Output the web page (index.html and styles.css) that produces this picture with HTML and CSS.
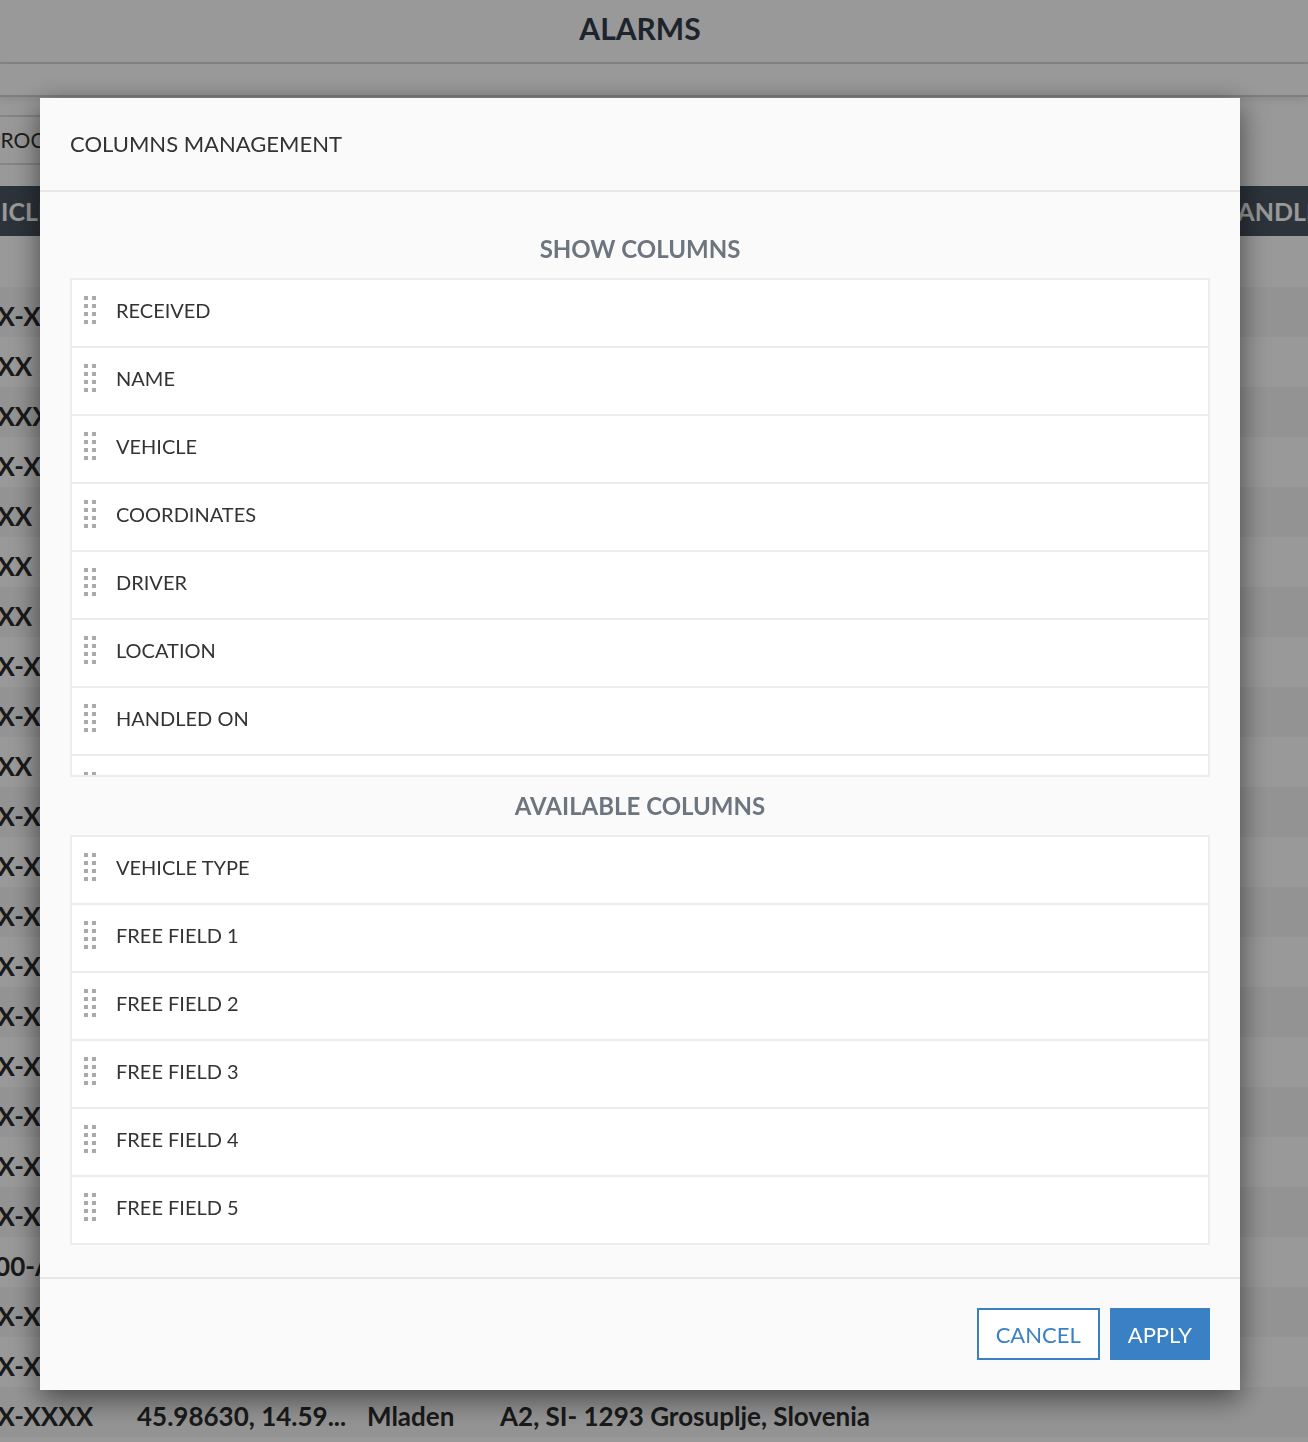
FILE: index.html
```html
<!DOCTYPE html>
<html lang="en">
<head>
    <meta charset="UTF-8">
    <meta name="viewport" content="width=device-width, initial-scale=1.0">
    <title>Alarms</title>
    <link rel="stylesheet" href="styles.css">
</head>
<body>

<!-- alarms page (behind the dialog) -->
<div class="page">
    <div class="page-header">
        <h1>ALARMS</h1>
    </div>
    <div class="sub-bar"></div>

    <div class="toolbar">
        <div class="status-select">PROCESSED</div>
    </div>

    <div class="alarm-table">
        <div class="alarm-head">
            <div class="cell first">VEHICLE</div>
            <div class="cell">COORDINATES</div>
            <div class="cell">DRIVER</div>
            <div class="cell">LOCATION</div>
            <div class="cell">HANDLED ON</div>
        </div>
        <div class="alarm-spacer"></div>

        <div class="alarm-row"><div class="cell">XX-XXXX</div><div class="cell">45.98630, 14.59...</div><div class="cell">Mladen</div><div class="cell">A2, SI- 1293 Grosuplje, Slovenia</div><div class="cell"></div></div>
        <div class="alarm-row"><div class="cell">XXX&nbsp;&nbsp;XX</div><div class="cell">46.05108, 14.50...</div><div class="cell">Mladen</div><div class="cell">A1, SI- 1000 Ljubljana, Slovenia</div><div class="cell"></div></div>
        <div class="alarm-row"><div class="cell">XXXXXX</div><div class="cell">46.05108, 14.50...</div><div class="cell">Mladen</div><div class="cell">A1, SI- 1000 Ljubljana, Slovenia</div><div class="cell"></div></div>
        <div class="alarm-row"><div class="cell">XX-XXXX</div><div class="cell">45.98630, 14.59...</div><div class="cell">Mladen</div><div class="cell">A2, SI- 1293 Grosuplje, Slovenia</div><div class="cell"></div></div>
        <div class="alarm-row"><div class="cell">XXX&nbsp;&nbsp;XX</div><div class="cell">46.23970, 15.26...</div><div class="cell">Mladen</div><div class="cell">A1, SI- 3000 Celje, Slovenia</div><div class="cell"></div></div>
        <div class="alarm-row"><div class="cell">XXX&nbsp;&nbsp;XX</div><div class="cell">46.23970, 15.26...</div><div class="cell">Mladen</div><div class="cell">A1, SI- 3000 Celje, Slovenia</div><div class="cell"></div></div>
        <div class="alarm-row"><div class="cell">XXX&nbsp;&nbsp;XX</div><div class="cell">46.23970, 15.26...</div><div class="cell">Mladen</div><div class="cell">A1, SI- 3000 Celje, Slovenia</div><div class="cell"></div></div>
        <div class="alarm-row"><div class="cell">XX-XXXX</div><div class="cell">45.98630, 14.59...</div><div class="cell">Mladen</div><div class="cell">A2, SI- 1293 Grosuplje, Slovenia</div><div class="cell"></div></div>
        <div class="alarm-row"><div class="cell">XX-XXXX</div><div class="cell">45.98630, 14.59...</div><div class="cell">Mladen</div><div class="cell">A2, SI- 1293 Grosuplje, Slovenia</div><div class="cell"></div></div>
        <div class="alarm-row"><div class="cell">XXX&nbsp;&nbsp;XX</div><div class="cell">46.55472, 15.64...</div><div class="cell">Mladen</div><div class="cell">A1, SI- 2000 Maribor, Slovenia</div><div class="cell"></div></div>
        <div class="alarm-row"><div class="cell">XX-XXXX</div><div class="cell">45.98630, 14.59...</div><div class="cell">Mladen</div><div class="cell">A2, SI- 1293 Grosuplje, Slovenia</div><div class="cell"></div></div>
        <div class="alarm-row"><div class="cell">XX-XXXX</div><div class="cell">45.98630, 14.59...</div><div class="cell">Mladen</div><div class="cell">A2, SI- 1293 Grosuplje, Slovenia</div><div class="cell"></div></div>
        <div class="alarm-row"><div class="cell">XX-XXXX</div><div class="cell">45.98630, 14.59...</div><div class="cell">Mladen</div><div class="cell">A2, SI- 1293 Grosuplje, Slovenia</div><div class="cell"></div></div>
        <div class="alarm-row"><div class="cell">XX-XXXX</div><div class="cell">45.98630, 14.59...</div><div class="cell">Mladen</div><div class="cell">A2, SI- 1293 Grosuplje, Slovenia</div><div class="cell"></div></div>
        <div class="alarm-row"><div class="cell">XX-XXXX</div><div class="cell">45.98630, 14.59...</div><div class="cell">Mladen</div><div class="cell">A2, SI- 1293 Grosuplje, Slovenia</div><div class="cell"></div></div>
        <div class="alarm-row"><div class="cell">XX-XXXX</div><div class="cell">45.98630, 14.59...</div><div class="cell">Mladen</div><div class="cell">A2, SI- 1293 Grosuplje, Slovenia</div><div class="cell"></div></div>
        <div class="alarm-row"><div class="cell">XX-XXXX</div><div class="cell">45.98630, 14.59...</div><div class="cell">Mladen</div><div class="cell">A2, SI- 1293 Grosuplje, Slovenia</div><div class="cell"></div></div>
        <div class="alarm-row"><div class="cell">XX-XXXX</div><div class="cell">45.98630, 14.59...</div><div class="cell">Mladen</div><div class="cell">A2, SI- 1293 Grosuplje, Slovenia</div><div class="cell"></div></div>
        <div class="alarm-row"><div class="cell">XX-XXXX</div><div class="cell">45.98630, 14.59...</div><div class="cell">Mladen</div><div class="cell">A2, SI- 1293 Grosuplje, Slovenia</div><div class="cell"></div></div>
        <div class="alarm-row"><div class="cell">000-ABC</div><div class="cell">45.98630, 14.59...</div><div class="cell">Mladen</div><div class="cell">A2, SI- 1293 Grosuplje, Slovenia</div><div class="cell"></div></div>
        <div class="alarm-row"><div class="cell">XX-XXXX</div><div class="cell">45.98630, 14.59...</div><div class="cell">Mladen</div><div class="cell">A2, SI- 1293 Grosuplje, Slovenia</div><div class="cell"></div></div>
        <div class="alarm-row"><div class="cell">XX-XXXX</div><div class="cell">45.98630, 14.59...</div><div class="cell">Mladen</div><div class="cell">A2, SI- 1293 Grosuplje, Slovenia</div><div class="cell"></div></div>
        <div class="alarm-row"><div class="cell">XX-XXXX</div><div class="cell">45.98630, 14.59...</div><div class="cell">Mladen</div><div class="cell">A2, SI- 1293 Grosuplje, Slovenia</div><div class="cell"></div></div>
    </div>
</div>

<!-- columns management dialog -->
<div class="backdrop">
    <div class="modal">
        <div class="modal-header">COLUMNS MANAGEMENT</div>

        <div class="modal-body">
            <h3 class="section-title">SHOW COLUMNS</h3>
            <ul class="column-list visible-list">
                <li><svg class="handle" viewBox="0 0 12 28"><rect x="0" y="0" width="4" height="4"/><rect x="8" y="0" width="4" height="4"/><rect x="0" y="8" width="4" height="4"/><rect x="8" y="8" width="4" height="4"/><rect x="0" y="16" width="4" height="4"/><rect x="8" y="16" width="4" height="4"/><rect x="0" y="24" width="4" height="4"/><rect x="8" y="24" width="4" height="4"/></svg>RECEIVED</li>
                <li><svg class="handle" viewBox="0 0 12 28"><rect x="0" y="0" width="4" height="4"/><rect x="8" y="0" width="4" height="4"/><rect x="0" y="8" width="4" height="4"/><rect x="8" y="8" width="4" height="4"/><rect x="0" y="16" width="4" height="4"/><rect x="8" y="16" width="4" height="4"/><rect x="0" y="24" width="4" height="4"/><rect x="8" y="24" width="4" height="4"/></svg>NAME</li>
                <li><svg class="handle" viewBox="0 0 12 28"><rect x="0" y="0" width="4" height="4"/><rect x="8" y="0" width="4" height="4"/><rect x="0" y="8" width="4" height="4"/><rect x="8" y="8" width="4" height="4"/><rect x="0" y="16" width="4" height="4"/><rect x="8" y="16" width="4" height="4"/><rect x="0" y="24" width="4" height="4"/><rect x="8" y="24" width="4" height="4"/></svg>VEHICLE</li>
                <li><svg class="handle" viewBox="0 0 12 28"><rect x="0" y="0" width="4" height="4"/><rect x="8" y="0" width="4" height="4"/><rect x="0" y="8" width="4" height="4"/><rect x="8" y="8" width="4" height="4"/><rect x="0" y="16" width="4" height="4"/><rect x="8" y="16" width="4" height="4"/><rect x="0" y="24" width="4" height="4"/><rect x="8" y="24" width="4" height="4"/></svg>COORDINATES</li>
                <li><svg class="handle" viewBox="0 0 12 28"><rect x="0" y="0" width="4" height="4"/><rect x="8" y="0" width="4" height="4"/><rect x="0" y="8" width="4" height="4"/><rect x="8" y="8" width="4" height="4"/><rect x="0" y="16" width="4" height="4"/><rect x="8" y="16" width="4" height="4"/><rect x="0" y="24" width="4" height="4"/><rect x="8" y="24" width="4" height="4"/></svg>DRIVER</li>
                <li><svg class="handle" viewBox="0 0 12 28"><rect x="0" y="0" width="4" height="4"/><rect x="8" y="0" width="4" height="4"/><rect x="0" y="8" width="4" height="4"/><rect x="8" y="8" width="4" height="4"/><rect x="0" y="16" width="4" height="4"/><rect x="8" y="16" width="4" height="4"/><rect x="0" y="24" width="4" height="4"/><rect x="8" y="24" width="4" height="4"/></svg>LOCATION</li>
                <li><svg class="handle" viewBox="0 0 12 28"><rect x="0" y="0" width="4" height="4"/><rect x="8" y="0" width="4" height="4"/><rect x="0" y="8" width="4" height="4"/><rect x="8" y="8" width="4" height="4"/><rect x="0" y="16" width="4" height="4"/><rect x="8" y="16" width="4" height="4"/><rect x="0" y="24" width="4" height="4"/><rect x="8" y="24" width="4" height="4"/></svg>HANDLED ON</li>
                <li><svg class="handle" viewBox="0 0 12 28"><rect x="0" y="0" width="4" height="4"/><rect x="8" y="0" width="4" height="4"/><rect x="0" y="8" width="4" height="4"/><rect x="8" y="8" width="4" height="4"/><rect x="0" y="16" width="4" height="4"/><rect x="8" y="16" width="4" height="4"/><rect x="0" y="24" width="4" height="4"/><rect x="8" y="24" width="4" height="4"/></svg>HANDLED BY</li>
            </ul>

            <h3 class="section-title">AVAILABLE COLUMNS</h3>
            <ul class="column-list">
                <li><svg class="handle" viewBox="0 0 12 28"><rect x="0" y="0" width="4" height="4"/><rect x="8" y="0" width="4" height="4"/><rect x="0" y="8" width="4" height="4"/><rect x="8" y="8" width="4" height="4"/><rect x="0" y="16" width="4" height="4"/><rect x="8" y="16" width="4" height="4"/><rect x="0" y="24" width="4" height="4"/><rect x="8" y="24" width="4" height="4"/></svg>VEHICLE TYPE</li>
                <li><svg class="handle" viewBox="0 0 12 28"><rect x="0" y="0" width="4" height="4"/><rect x="8" y="0" width="4" height="4"/><rect x="0" y="8" width="4" height="4"/><rect x="8" y="8" width="4" height="4"/><rect x="0" y="16" width="4" height="4"/><rect x="8" y="16" width="4" height="4"/><rect x="0" y="24" width="4" height="4"/><rect x="8" y="24" width="4" height="4"/></svg>FREE FIELD 1</li>
                <li><svg class="handle" viewBox="0 0 12 28"><rect x="0" y="0" width="4" height="4"/><rect x="8" y="0" width="4" height="4"/><rect x="0" y="8" width="4" height="4"/><rect x="8" y="8" width="4" height="4"/><rect x="0" y="16" width="4" height="4"/><rect x="8" y="16" width="4" height="4"/><rect x="0" y="24" width="4" height="4"/><rect x="8" y="24" width="4" height="4"/></svg>FREE FIELD 2</li>
                <li><svg class="handle" viewBox="0 0 12 28"><rect x="0" y="0" width="4" height="4"/><rect x="8" y="0" width="4" height="4"/><rect x="0" y="8" width="4" height="4"/><rect x="8" y="8" width="4" height="4"/><rect x="0" y="16" width="4" height="4"/><rect x="8" y="16" width="4" height="4"/><rect x="0" y="24" width="4" height="4"/><rect x="8" y="24" width="4" height="4"/></svg>FREE FIELD 3</li>
                <li><svg class="handle" viewBox="0 0 12 28"><rect x="0" y="0" width="4" height="4"/><rect x="8" y="0" width="4" height="4"/><rect x="0" y="8" width="4" height="4"/><rect x="8" y="8" width="4" height="4"/><rect x="0" y="16" width="4" height="4"/><rect x="8" y="16" width="4" height="4"/><rect x="0" y="24" width="4" height="4"/><rect x="8" y="24" width="4" height="4"/></svg>FREE FIELD 4</li>
                <li><svg class="handle" viewBox="0 0 12 28"><rect x="0" y="0" width="4" height="4"/><rect x="8" y="0" width="4" height="4"/><rect x="0" y="8" width="4" height="4"/><rect x="8" y="8" width="4" height="4"/><rect x="0" y="16" width="4" height="4"/><rect x="8" y="16" width="4" height="4"/><rect x="0" y="24" width="4" height="4"/><rect x="8" y="24" width="4" height="4"/></svg>FREE FIELD 5</li>
            </ul>
        </div>

        <div class="modal-footer">
            <button class="btn btn-outline">CANCEL</button>
            <button class="btn btn-primary">APPLY</button>
        </div>
    </div>
</div>

</body>
</html>
```

FILE: styles.css
```css
html, body {
    margin: 0;
    height: 100%;
    overflow: hidden;
}
body {
    font-family: 'Lato', 'Liberation Sans', sans-serif;
    background-color: #fff;
    color: #333;
}

/* page behind the dialog */
.page-header {
    height: 62px;
    padding-right: 28px;
    border-bottom: 2px solid #dedede;
    text-align: center;
}
.page-header h1 {
    margin: 0;
    line-height: 56px;
    font-size: 30px;
    font-weight: bold;
    color: #333d4a;
}
.sub-bar {
    height: 31px;
    border-bottom: 2px solid #d2d2d2;
    box-shadow: 0 2px 8px rgba(0, 0, 0, 0.12);
}
.toolbar {
    height: 71px;
    padding-top: 18px;
}
.status-select {
    width: 110px;
    height: 46px;
    margin-left: -56px;
    padding-left: 42px;
    border: 2px solid #dcdcdc;
    line-height: 46px;
    font-size: 21px;
    color: #333;
}
.alarm-table {
    margin-left: -40px;
}
.alarm-head, .alarm-row {
    display: grid;
    grid-template-columns: 157px 230px 133px 718px 1fr;
}
.alarm-head {
    height: 50px;
    background-color: #4a5561;
    color: #fff;
    font-size: 25px;
    font-weight: bold;
    line-height: 50px;
}
.alarm-head .cell.first {
    text-indent: -30px;
}
.alarm-spacer {
    height: 51px;
}
.alarm-row {
    height: 50px;
    padding-top: 8px;
    box-sizing: border-box;
    line-height: 42px;
    font-size: 26px;
    font-weight: bold;
    color: #2b2b2b;
}
.alarm-row:nth-child(odd) {
    background-color: #f6f6f6;
}
.cell {
    padding-left: 20px;
    white-space: nowrap;
    overflow: hidden;
}

/* dialog */
.backdrop {
    position: fixed;
    top: 0;
    left: 0;
    right: 0;
    bottom: 0;
    padding: 98px 28px 0 0;
    background-color: rgba(0, 0, 0, 0.4);
    display: flex;
    justify-content: center;
    align-items: flex-start;
}
.modal {
    width: 1200px;
    background-color: #fafafa;
    box-shadow: 0 8px 28px rgba(0, 0, 0, 0.55);
}
.modal-header {
    height: 92px;
    padding: 0 30px 2px;
    box-sizing: border-box;
    border-bottom: 2px solid #e8e8e8;
    display: flex;
    align-items: center;
    font-size: 22px;
    color: #333;
}
.modal-header {
    height: 94px;
}
.modal-body {
    padding: 28px 30px 32px;
}
.section-title {
    margin: 14px 0;
    line-height: 30px;
    font-size: 24px;
    font-weight: bold;
    text-align: center;
    color: #6d757e;
}
.column-list {
    list-style: none;
    margin: 0;
    padding: 0;
    border: 2px solid #ededed;
    background-color: #fff;
}
.visible-list {
    height: 495px;
    overflow-y: auto;
    scrollbar-width: none;
}
.column-list li {
    height: 66px;
    padding: 0 0 6px 12px;
    box-sizing: border-box;
    display: flex;
    align-items: center;
    gap: 20px;
    font-size: 20px;
    color: #333;
}
.column-list li + li {
    height: 68px;
    border-top: 2px solid #ededed;
}
.handle {
    width: 12px;
    height: 28px;
    fill: #aaa;
    flex-shrink: 0;
}
.modal-footer {
    padding: 29px 30px 30px;
    border-top: 2px solid #e8e8e8;
    display: flex;
    justify-content: flex-end;
    gap: 10px;
}
.btn {
    height: 52px;
    padding: 0 17px;
    border: 2px solid #3a80c4;
    font-family: inherit;
    font-size: 22px;
    cursor: pointer;
}
.btn-outline {
    background-color: #fff;
    color: #3a80c4;
}
.btn-primary {
    padding: 0 16px;
    background-color: #3a80c4;
    color: #fff;
}
```
